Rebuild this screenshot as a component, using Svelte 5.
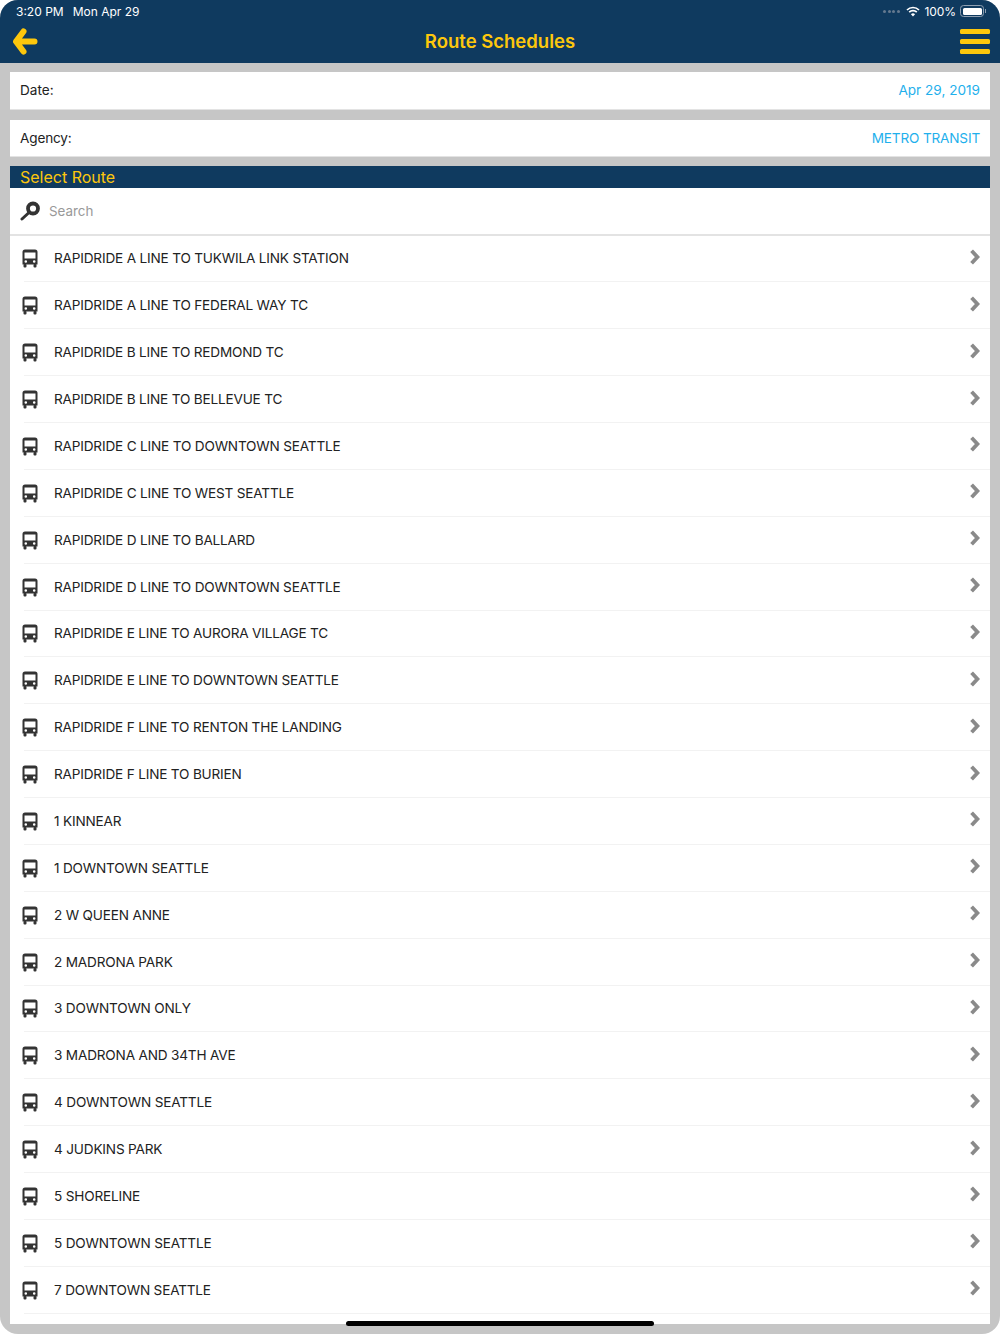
<script>
  const routes = [
    'RAPIDRIDE A LINE TO TUKWILA LINK STATION',
    'RAPIDRIDE A LINE TO FEDERAL WAY TC',
    'RAPIDRIDE B LINE TO REDMOND TC',
    'RAPIDRIDE B LINE TO BELLEVUE TC',
    'RAPIDRIDE C LINE TO DOWNTOWN SEATTLE',
    'RAPIDRIDE C LINE TO WEST SEATTLE',
    'RAPIDRIDE D LINE TO BALLARD',
    'RAPIDRIDE D LINE TO DOWNTOWN SEATTLE',
    'RAPIDRIDE E LINE TO AURORA VILLAGE TC',
    'RAPIDRIDE E LINE TO DOWNTOWN SEATTLE',
    'RAPIDRIDE F LINE TO RENTON THE LANDING',
    'RAPIDRIDE F LINE TO BURIEN',
    '1 KINNEAR',
    '1 DOWNTOWN SEATTLE',
    '2 W QUEEN ANNE',
    '2 MADRONA PARK',
    '3 DOWNTOWN ONLY',
    '3 MADRONA AND 34TH AVE',
    '4 DOWNTOWN SEATTLE',
    '4 JUDKINS PARK',
    '5 SHORELINE',
    '5 DOWNTOWN SEATTLE',
    '7 DOWNTOWN SEATTLE'
  ]
</script>

<div class="screen">
  <header>
    <div class="status">
      <div class="status-left"><span>3:20 PM</span><span>Mon Apr 29</span></div>
      <div class="status-right">
        <span class="dots"><i></i><i></i><i></i><i></i></span>
        <svg width="14" height="11" viewBox="0 0 14 11">
          <path d="M1 4 A8.5 8.5 0 0 1 13 4" fill="none" stroke="#fff" stroke-width="1.7" />
          <path d="M3.2 6.2 A5.3 5.3 0 0 1 10.8 6.2" fill="none" stroke="#fff" stroke-width="1.7" />
          <path d="M7 10.5 L4.9 8.2 A3 3 0 0 1 9.1 8.2 Z" fill="#fff" />
        </svg>
        <span class="pct">100%</span>
        <span class="battery"><b></b></span>
      </div>
    </div>
    <div class="navbar">
      <svg class="back" width="26" height="27" viewBox="0 0 26 27">
        <path d="M11.5 3.5 L4 13.5 L11.5 23.5 M5 13.5 H22.5" fill="none" stroke="#fdc70c" stroke-width="6" stroke-linecap="round" stroke-linejoin="round" />
      </svg>
      <h1>Route Schedules</h1>
      <div class="menu"><i></i><i></i><i></i></div>
    </div>
  </header>

  <main>
    <div class="field"><span>Date:</span><span class="value">Apr 29, 2019</span></div>
    <div class="field tight"><span>Agency:</span><span class="value">METRO TRANSIT</span></div>

    <div class="panel">
      <h2>Select Route</h2>
      <div class="search">
        <svg width="20" height="20" viewBox="0 0 20 20">
          <circle cx="13" cy="7.5" r="5" fill="none" stroke="#333" stroke-width="3.8" />
          <path d="M8.5 12 L2 18" stroke="#333" stroke-width="3" stroke-linecap="round" />
        </svg>
        <span>Search</span>
      </div>
      {#each routes as route}
        <div class="row">
          <svg class="bus" width="16" height="19" viewBox="0 0 16 19">
            <path fill-rule="evenodd" fill="#333" d="M3 0.5 H13 A2.5 2.5 0 0 1 15.5 3 V15.5 H0.5 V3 A2.5 2.5 0 0 1 3 0.5 Z M2.5 3.5 V9.5 H13.5 V3.5 Z M3.8 11.2 A1.3 1.3 0 1 0 3.8 13.8 A1.3 1.3 0 1 0 3.8 11.2 Z M12.2 11.2 A1.3 1.3 0 1 0 12.2 13.8 A1.3 1.3 0 1 0 12.2 11.2 Z" />
            <rect x="1.5" y="15" width="3" height="3.5" rx="1" fill="#333" />
            <rect x="11.5" y="15" width="3" height="3.5" rx="1" fill="#333" />
          </svg>
          <span class="name">{route}</span>
          <svg class="chev" width="11" height="16" viewBox="0 0 11 16">
            <path d="M2.6 1.8 L8.4 8 L2.6 14.2" fill="none" stroke="#8a8a8a" stroke-width="3.8" stroke-linejoin="miter" />
          </svg>
        </div>
      {/each}
    </div>
  </main>

  <div class="home"></div>
</div>

<style>
  :global(body) { background: #fff; }
  .screen {
    position: relative;
    width: 1000px;
    height: 1334px;
    border-radius: 18px;
    overflow: hidden;
    background: #c6c6c6;
    font-family: Inter, "Liberation Sans", sans-serif;
    color: #222;
  }
  header {
    height: 63px;
    background: #0f3a5f;
    box-sizing: border-box;
    padding-top: 3px;
  }
  .status {
    display: flex;
    justify-content: space-between;
    align-items: center;
    height: 16px;
    padding: 0 16px;
    color: #fff;
    font-size: 12px;
  }
  .status-left { display: flex; gap: 9px; }
  .status-right { display: flex; align-items: center; gap: 5px; }
  .pct { letter-spacing: -0.1px; margin-right: -1px; }
  .dots { display: flex; gap: 1.5px; margin-right: 1px; }
  .dots i { width: 3px; height: 3px; border-radius: 50%; background: #64798f; }
  .battery {
    display: block;
    width: 24px;
    height: 12px;
    border: 1px solid #8fa0b2;
    border-radius: 3.5px;
    padding: 1.5px;
    box-sizing: border-box;
    position: relative;
  }
  .battery b { display: block; height: 100%; background: #fff; border-radius: 1.5px; }
  .battery::after {
    content: '';
    position: absolute;
    right: -3px;
    top: 3px;
    width: 1.5px;
    height: 4px;
    background: #8fa0b2;
  }
  .navbar {
    display: flex;
    align-items: center;
    justify-content: space-between;
    height: 44px;
    padding: 0 10px 0 12px;
    position: relative;
  }
  h1 {
    position: absolute;
    left: 0;
    right: 0;
    margin: 0;
    text-align: center;
    color: #fdc70c;
    font-size: 18.5px;
    font-weight: 600;
  }
  .menu { display: flex; flex-direction: column; gap: 5px; }
  .menu i { display: block; width: 30px; height: 5px; border-radius: 1.5px; background: #fdc70c; }
  main { padding: 9px 10px 0; height: 1252px; display: flex; flex-direction: column; gap: 10px; }
  .field {
    display: flex;
    justify-content: space-between;
    align-items: center;
    box-sizing: border-box;
    height: 37.5px;
    padding: 0 10px;
    background: #fff;
    border-bottom: 1px solid #e3e3e3;
    font-size: 13.6px;
    flex: none;
  }
  .tight { letter-spacing: -0.17px; }
  .value { color: #1fb0ec; }
  .panel { background: #fff; flex: 1; overflow: hidden; margin-top: -1px; }
  h2 {
    margin: 0;
    height: 22px;
    line-height: 22px;
    padding: 0 10px;
    background: #0f3a5f;
    color: #fdc70c;
    font-size: 16px;
    font-weight: 400;
  }
  .search {
    display: flex;
    align-items: center;
    height: 47.5px;
    padding-left: 10px;
    gap: 9px;
    border-bottom: 2px solid #e3e3e3;
    box-sizing: border-box;
    color: #999;
    font-size: 13.4px;
  }
  .row {
    display: flex;
    align-items: center;
    height: 46.875px;
    box-sizing: border-box;
    margin-left: 14px;
    padding-right: 10px;
    border-bottom: 1px solid #f2f2f2;
  }
  .bus { margin-left: -2px; margin-top: 1px; flex: none; }
  .name { margin-left: 16px; font-size: 13.6px; letter-spacing: -0.18px; flex: 1; }
  .chev { margin-top: -3px; }
  .home {
    position: absolute;
    left: 346px;
    bottom: 8px;
    width: 308px;
    height: 5px;
    border-radius: 3px;
    background: #000;
  }
</style>
